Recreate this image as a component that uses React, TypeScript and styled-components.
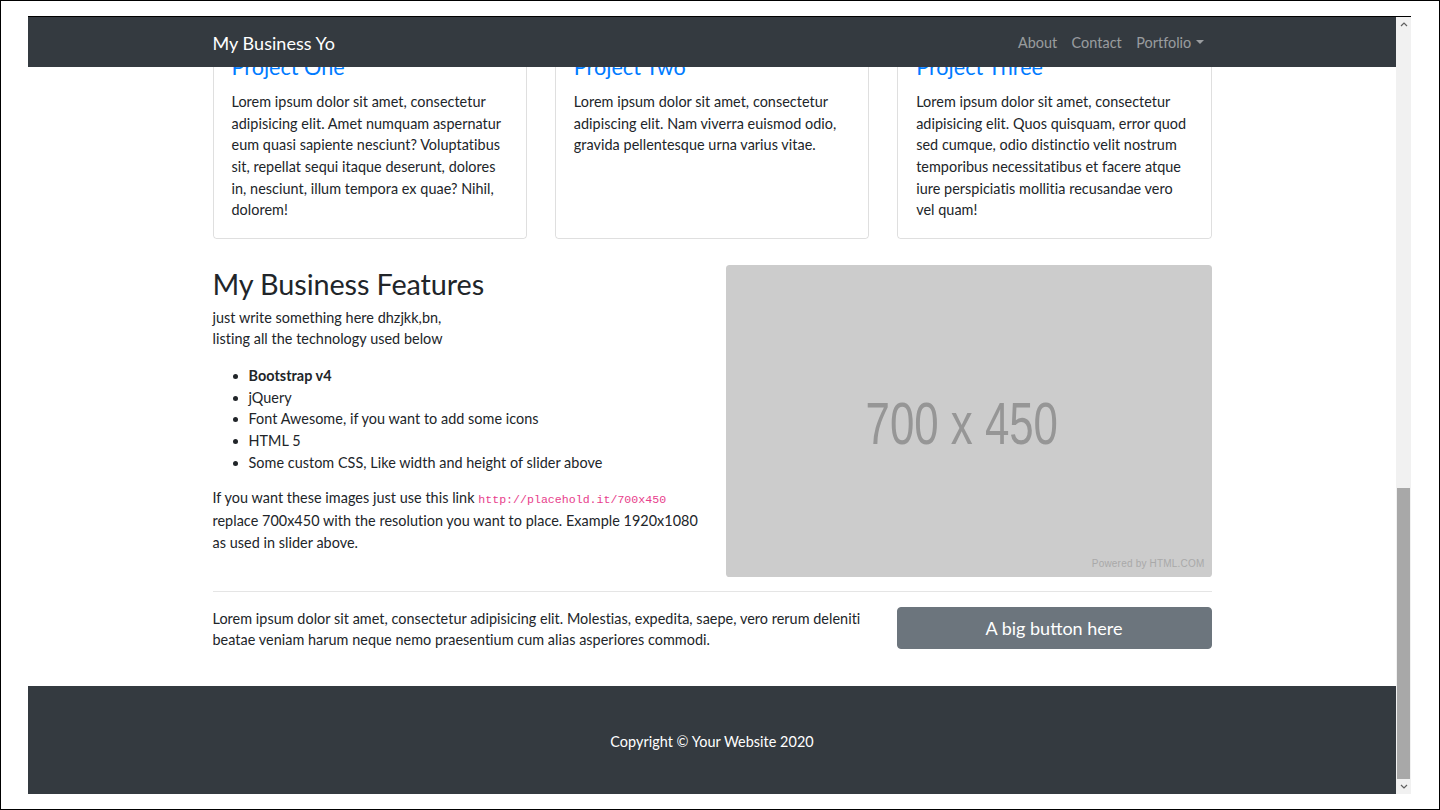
import React from "react";
import styled, { createGlobalStyle } from "styled-components";

const GlobalStyle = createGlobalStyle`
  html, body {
    margin: 0;
    padding: 0;
    background: #fff;
    width: 1440px;
    height: 810px;
    overflow: hidden;
  }
  * { box-sizing: border-box; }
`;

const SANS = `"Lato", "Open Sans", sans-serif`;

const Frame = styled.div`
  width: 1440px;
  height: 810px;
  border: 1px solid #000;
  padding: 15px 0 0 27px;
  font-family: ${SANS};
`;

const Viewport = styled.div`
  width: 1383px;
  height: 778px;
  border-top: 1px solid #000;
  display: flex;
`;

const Content = styled.div`
  position: relative;
  flex: 1;
  overflow: hidden;
  padding-top: 17.5px;
  color: #212529;
  font-size: 14.4px;
  line-height: 21.6px;
  letter-spacing: 0.04px;
`;

const Navbar = styled.nav`
  position: absolute;
  top: 0;
  left: 0;
  right: 0;
  height: 50px;
  background: #343a40;
  z-index: 2;
`;

const NavInner = styled.div`
  width: 999px;
  height: 100%;
  margin: 0 auto;
  padding-top: 2px;
  display: flex;
  align-items: center;
  justify-content: space-between;
`;

const Brand = styled.a`
  color: #fff;
  font-size: 18px;
  line-height: 27px;
  text-decoration: none;
`;

const NavLinks = styled.ul`
  display: flex;
  list-style: none;
  margin: 0;
  padding: 0;
`;

const NavLink = styled.li<{ $caret?: boolean }>`
  color: rgba(255, 255, 255, 0.5);
  padding: 0 7.2px;
  font-size: 14.4px;
  display: flex;
  align-items: center;
  &::after {
    content: ${(p) => (p.$caret ? "''" : "none")};
    display: inline-block;
    margin-left: 5px;
    border-top: 4.4px solid rgba(255, 255, 255, 0.5);
    border-left: 4.4px solid transparent;
    border-right: 4.4px solid transparent;
    margin-top: -2px;
  }
`;

const Container = styled.div`
  width: 999px;
  margin: 0 auto;
`;

const CardRow = styled.div`
  display: grid;
  grid-template-columns: repeat(3, 1fr);
  gap: 28px;
  margin-bottom: 26.2px;
`;

const Card = styled.div`
  border: 1px solid rgba(0, 0, 0, 0.125);
  border-radius: 3.6px;
  padding: 19px 18px 17px;
`;

const CardTitle = styled.h4`
  margin: 0 0 10.8px;
  font-size: 21.6px;
  line-height: 1.2;
  font-weight: 400;
  color: #007bff;
  letter-spacing: 0;
`;

const CardText = styled.p`
  margin: 0;
`;

const FeatureRow = styled.div`
  display: grid;
  grid-template-columns: 1fr 1fr;
  gap: 27px;
`;

const Heading = styled.h2`
  margin: 0 0 5.2px;
  padding-top: 2px;
  font-size: 28.8px;
  line-height: 1.2;
  font-weight: 400;
  letter-spacing: -0.1px;
`;

const Para = styled.p`
  margin: 0 0 14.4px;
`;

const List = styled.ul`
  margin: 0 0 14.4px;
  padding-left: 36px;
  li { padding-top: 1px; margin-bottom: -1px; }
`;

const Code = styled.code`
  font-family: "Liberation Mono", monospace;
  font-size: 11.6px;
  color: #e83e8c;
  letter-spacing: 0;
`;

const Placeholder = styled.div`
  position: relative;
  height: 312px;
  background: #ccc;
  border-radius: 3.6px;
  padding: 6px 14px 0 0;
  display: flex;
  align-items: center;
  justify-content: center;
`;

const PlaceholderText = styled.span`
  font-family: "Liberation Sans", Arial, sans-serif;
  font-size: 60px;
  line-height: 1;
  color: #969696;
  letter-spacing: 0;
  transform: scaleX(0.73);
  white-space: nowrap;
`;

const Powered = styled.span`
  position: absolute;
  right: 7px;
  bottom: 2px;
  font-family: "Liberation Sans", Arial, sans-serif;
  font-size: 10px;
  letter-spacing: 0.2px;
  color: #a9a9a9;
`;

const Rule = styled.hr`
  margin: 14.4px 0;
  border: 0;
  border-top: 1px solid rgba(0, 0, 0, 0.1);
`;

const CtaRow = styled.div`
  display: grid;
  grid-template-columns: 657px 315px;
  gap: 27px;
  margin-bottom: 35px;
`;

const CtaText = styled.div`
  padding-top: 1px;
`;

const BigButton = styled.button`
  height: 42px;
  background: #6c757d;
  border: 1px solid #6c757d;
  border-radius: 4px;
  color: #fff;
  font-family: ${SANS};
  font-size: 18px;
  line-height: 27px;
  padding: 2px 14px 0;
`;

const Footer = styled.footer`
  background: #343a40;
  padding: 45px 0 41.4px;
  text-align: center;
  color: #fff;
`;

const Scrollbar = styled.div`
  width: 15px;
  background: #f1f1f1;
  display: flex;
  flex-direction: column;
`;

const ScrollArrow = styled.div`
  height: 15px;
  display: flex;
  align-items: center;
  justify-content: center;
`;

const Track = styled.div`
  flex: 1;
  display: flex;
  flex-direction: column;
  justify-content: flex-end;
`;

const Thumb = styled.div`
  height: 291px;
  margin: 0 1px;
  background: #a8a8a8;
`;

const Chevron = ({ up }: { up?: boolean }) => (
  <svg width="8" height="5" viewBox="0 0 8 5">
    <path
      d={up ? "M1 4 L4 1 L7 4" : "M1 1 L4 4 L7 1"}
      fill="none"
      stroke="#606060"
      strokeWidth="1.2"
    />
  </svg>
);

const cards = [
  {
    title: "Project One",
    text: "Lorem ipsum dolor sit amet, consectetur adipisicing elit. Amet numquam aspernatur eum quasi sapiente nesciunt? Voluptatibus sit, repellat sequi itaque deserunt, dolores in, nesciunt, illum tempora ex quae? Nihil, dolorem!",
  },
  {
    title: "Project Two",
    text: "Lorem ipsum dolor sit amet, consectetur adipiscing elit. Nam viverra euismod odio, gravida pellentesque urna varius vitae.",
  },
  {
    title: "Project Three",
    text: "Lorem ipsum dolor sit amet, consectetur adipisicing elit. Quos quisquam, error quod sed cumque, odio distinctio velit nostrum temporibus necessitatibus et facere atque iure perspiciatis mollitia recusandae vero vel quam!",
  },
];

export default function App() {
  return (
    <>
      <GlobalStyle />
      <Frame>
        <Viewport>
          <Content>
            <Navbar>
              <NavInner>
                <Brand>My Business Yo</Brand>
                <NavLinks>
                  <NavLink>About</NavLink>
                  <NavLink>Contact</NavLink>
                  <NavLink $caret>Portfolio</NavLink>
                </NavLinks>
              </NavInner>
            </Navbar>
            <Container>
              <CardRow>
                {cards.map((c) => (
                  <Card key={c.title}>
                    <CardTitle>{c.title}</CardTitle>
                    <CardText>{c.text}</CardText>
                  </Card>
                ))}
              </CardRow>
              <FeatureRow>
                <div>
                  <Heading>My Business Features</Heading>
                  <Para>
                    just write something here dhzjkk,bn,
                    <br />
                    listing all the technology used below
                  </Para>
                  <List>
                    <li>
                      <strong>Bootstrap v4</strong>
                    </li>
                    <li>jQuery</li>
                    <li>Font Awesome, if you want to add some icons</li>
                    <li>HTML 5</li>
                    <li>Some custom CSS, Like width and height of slider above</li>
                  </List>
                  <Para>
                    If you want these images just use this link{" "}
                    <Code>http://placehold.it/700x450</Code> replace 700x450 with the
                    resolution you want to place. Example 1920x1080 as used in slider
                    above.
                  </Para>
                </div>
                <Placeholder>
                  <PlaceholderText>700 x 450</PlaceholderText>
                  <Powered>Powered by HTML.COM</Powered>
                </Placeholder>
              </FeatureRow>
              <Rule />
              <CtaRow>
                <CtaText>
                  Lorem ipsum dolor sit amet, consectetur adipisicing elit. Molestias,
                  expedita, saepe, vero rerum deleniti beatae veniam harum neque nemo
                  praesentium cum alias asperiores commodi.
                </CtaText>
                <BigButton>A big button here</BigButton>
              </CtaRow>
            </Container>
            <Footer>Copyright © Your Website 2020</Footer>
          </Content>
          <Scrollbar>
            <ScrollArrow>
              <Chevron up />
            </ScrollArrow>
            <Track>
              <Thumb />
            </Track>
            <ScrollArrow>
              <Chevron />
            </ScrollArrow>
          </Scrollbar>
        </Viewport>
      </Frame>
    </>
  );
}
